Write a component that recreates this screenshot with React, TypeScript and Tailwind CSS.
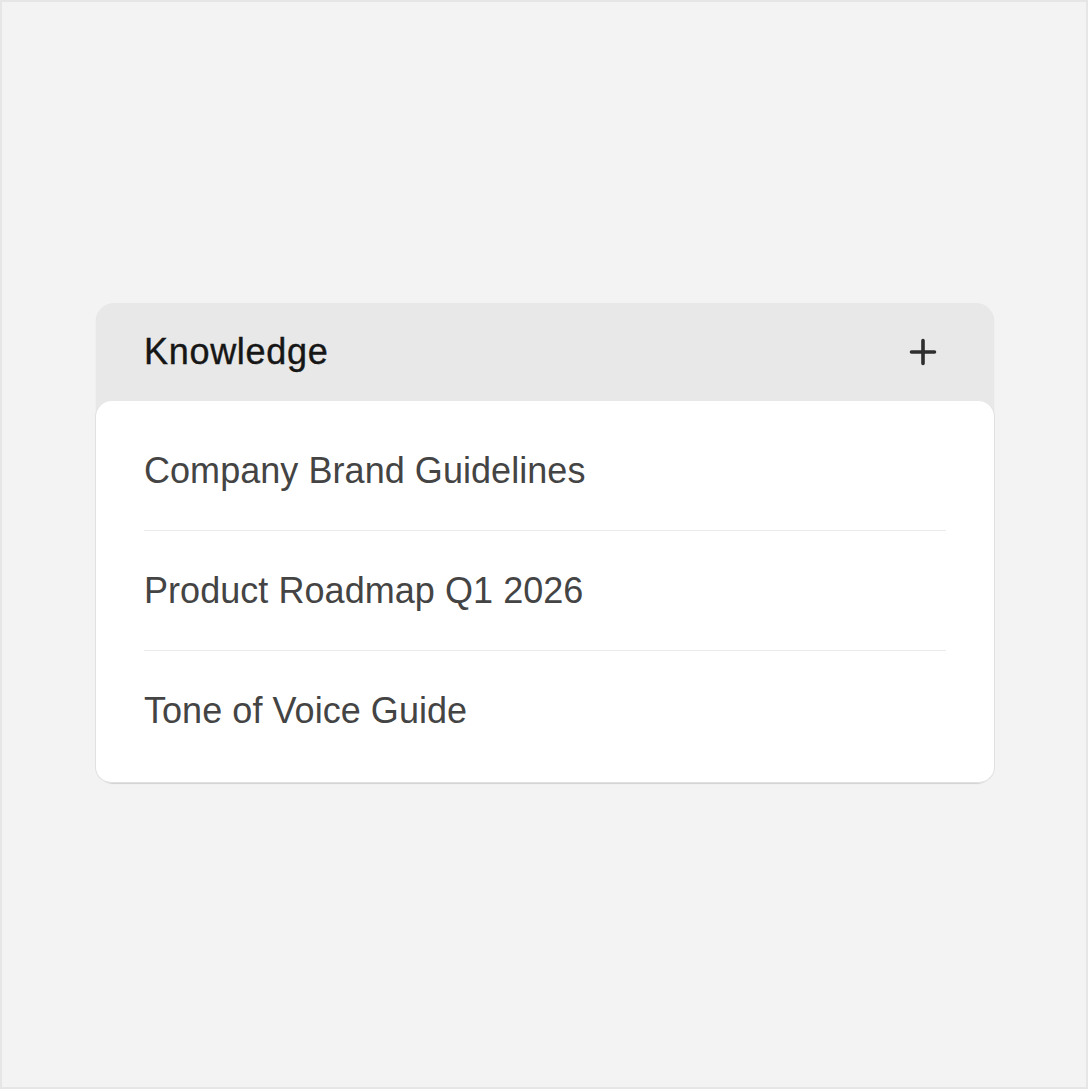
import React from "react";

const items = ["Company Brand Guidelines", "Product Roadmap Q1 2026", "Tone of Voice Guide"];

export default function App() {
  return (
    <div
      className="w-[1088px] h-[1089px] bg-[#f3f3f3] border-2 border-[#e6e6e6] pt-[301px] pl-[94px]"
      style={{ fontFamily: '"Liberation Sans", Arial, sans-serif' }}
    >
      <div className="w-[898px] rounded-[18px] bg-[#e8e8e8] shadow-[0_1px_1px_rgba(0,0,0,0.14)]">
        <div className="h-[98px] flex items-center justify-between pl-12 pr-[57px]">
          <span className="text-[36px] text-[#161616] tracking-[0.7px] [-webkit-text-stroke:0.4px_#161616]">Knowledge</span>
          <svg width="28" height="28" viewBox="0 0 28 28" fill="none">
            <path d="M14 2.5v23M2.5 14h23" stroke="#2e2e2e" strokeWidth="3.6" strokeLinecap="round" />
          </svg>
        </div>
        <div className="bg-white rounded-[16px] px-12 pt-[10px] pb-[11px] border border-[#e0e0e0] border-t-0 -mx-px -mb-px">
          {items.map((t, i) => (
            <div
              key={t}
              className={
                "h-[120px] flex items-center " + (i < items.length - 1 ? "border-b border-[#ebebeb]" : "")
              }
            >
              <span className="text-[36px] text-[#444444] tracking-[0.05px]">{t}</span>
            </div>
          ))}
        </div>
      </div>
    </div>
  );
}
